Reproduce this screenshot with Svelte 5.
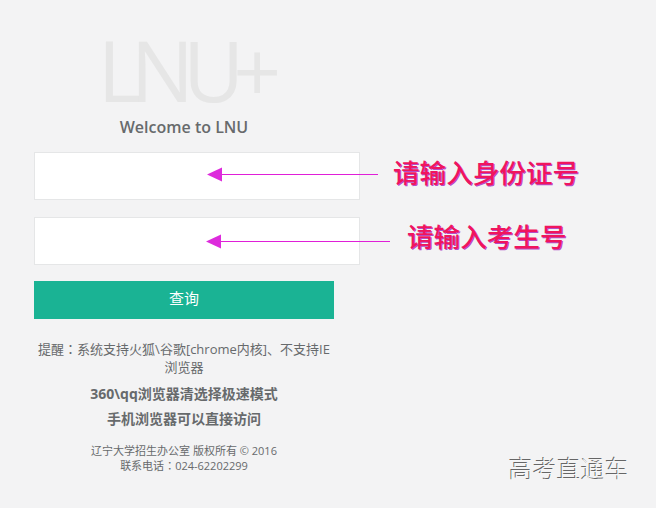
<script>
  const fields = [
    { label: '请输入身份证号', cls: 'one', width: 171 },
    { label: '请输入考生号', cls: 'two', width: 184 }
  ];
</script>

<main class="page">
  <section class="box">
    <div class="logo">LNU+</div>
    <h3>Welcome to LNU</h3>
    <form>
      {#each fields as f}
        <div class="field {f.cls}">
          <input type="text" />
          <svg class="arrow" width={f.width} height="15" viewBox="0 0 {f.width} 15">
            <path d="M14 7.5H{f.width}" stroke="#e01fd8" stroke-width="1" fill="none" />
            <path d="M0 7.5L15 .5V14.500Z" fill="#dd2bdc" />
          </svg>
          <span class="note">{f.label}</span>
        </div>
      {/each}
      <button type="button">查询</button>
    </form>
    <p class="tip">提醒<span class="colon">：</span>系统支持火狐\谷歌[chrome内核]、不支持IE浏览器</p>
    <p class="strong first">360\qq浏览器清选择极速模式</p>
    <p class="strong second">手机浏览器可以直接访问</p>
    <p class="foot">辽宁大学招生办公室 版权所有 © 2016<br />联系电话<span class="colon">：</span>024-62202299</p>
  </section>
  <div class="mark">高考直通车</div>
</main>

<style>
  :global(body) {
    margin: 0;
    background: #f3f3f4;
  }
  .page {
    position: relative;
    width: 656px;
    height: 508px;
    overflow: hidden;
    font-family: "Open Sans", "Noto Sans CJK SC", sans-serif;
    color: #676a6c;
    font-size: 13px;
  }
  .box {
    width: 300px;
    margin-left: 34px;
    text-align: center;
    display: flow-root;
  }
  .logo {
    height: 64px;
    margin-top: 38px;
    font-family: "Open Sans", sans-serif;
    font-weight: 500;
    font-size: 84px;
    line-height: 64px;
    letter-spacing: -11px;
    color: #e6e6e6;
    white-space: nowrap;
  }
  h3 {
    margin: 14px 0 0;
    font-size: 16px;
    line-height: 22px;
    font-weight: 600;
    color: #676a6c;
  }
  form {
    margin-top: 14px;
  }
  .field {
    position: relative;
    margin-bottom: 17px;
    width: 326px;
  }
  input {
    display: block;
    box-sizing: border-box;
    width: 326px;
    height: 48px;
    background: #fff;
    border: 1px solid #e5e6e7;
    padding: 0;
    margin: 0;
  }
  .arrow {
    position: absolute;
    top: 15px;
    left: 173px;
  }
  .two .arrow {
    top: 17px;
    left: 172px;
  }
  .note {
    position: absolute;
    white-space: nowrap;
    font-family: "Noto Sans CJK SC", sans-serif;
    font-weight: 500;
    font-size: 26.6px;
    line-height: 30px;
    color: #f0155d;
    text-shadow: 1px 1px 0 #b44cc8;
    top: 5px;
    left: 359px;
  }
  .two .note {
    left: 373px;
    top: 4px;
  }
  button {
    display: block;
    width: 300px;
    height: 38px;
    margin: -1px 0 0;
    background: #1ab394;
    border: 0;
    color: #fff;
    font: inherit;
    font-size: 15px;
    padding: 0 0 6px;
  }
  p {
    margin: 0;
  }
  .colon {
    font-family: "Noto Sans CJK TC", sans-serif;
  }
  .tip {
    margin-top: 21px;
    line-height: 18px;
  }
  .strong {
    font-weight: 700;
    font-size: 14px;
    line-height: 18px;
  }
  .first {
    margin-top: 9px;
  }
  .second {
    margin-top: 7px;
  }
  .foot {
    margin-top: 15px;
    font-size: 11px;
    line-height: 15px;
  }
  .mark {
    position: absolute;
    left: 509px;
    top: 453px;
    font-family: "Noto Sans CJK SC", sans-serif;
    font-weight: 300;
    font-size: 24px;
    line-height: 30px;
    color: #f6f6f6;
    text-shadow: -1px -1px 0 #666;
  }
</style>
